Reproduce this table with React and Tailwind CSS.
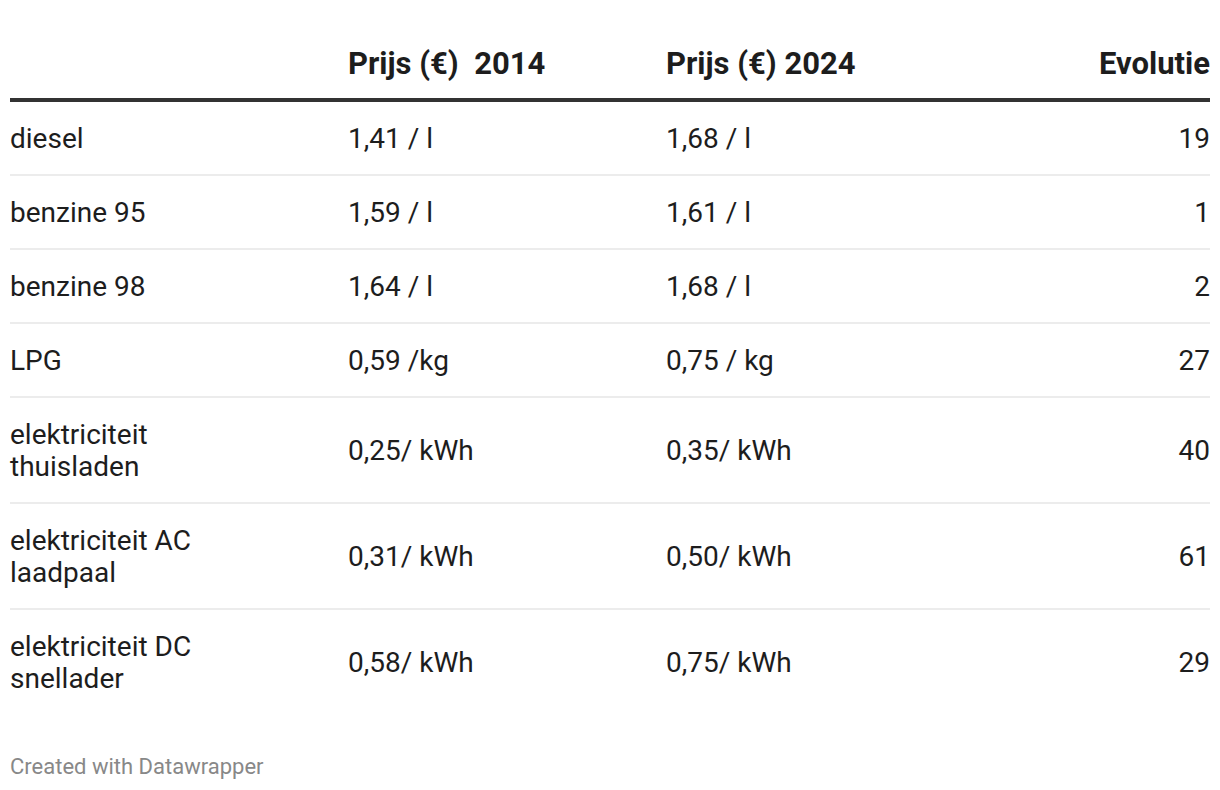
export default function App() {
  const rows = [
    ["diesel", "1,41 / l", "1,68 / l", "19"],
    ["benzine 95", "1,59 / l", "1,61 / l", "1"],
    ["benzine 98", "1,64 / l", "1,68 / l", "2"],
    ["LPG", "0,59 /kg", "0,75 / kg", "27"],
    [["elektriciteit", "thuisladen"], "0,25/ kWh", "0,35/ kWh", "40"],
    [["elektriciteit AC", "laadpaal"], "0,31/ kWh", "0,50/ kWh", "61"],
    [["elektriciteit DC", "snellader"], "0,58/ kWh", "0,75/ kWh", "29"],
  ];
  return (
    <div className="w-[1220px] h-[790px] bg-white text-[#1d1d1d]" style={{ fontFamily: "Roboto, 'Noto Sans', sans-serif" }}>
      <div className="pl-[10px] pr-[10px] pt-[48px]">
        <div className="grid grid-cols-[338px_318px_1fr_200px] items-center pb-[18px] border-b-4 border-[#333] text-[31px] leading-[32px] font-bold">
          <div></div>
          <div className="whitespace-pre">Prijs (€)  2014</div>
          <div>Prijs (€) 2024</div>
          <div className="text-right">Evolutie</div>
        </div>
        {rows.map((r, i) => (
          <div
            key={i}
            className={
              "grid grid-cols-[338px_318px_1fr_200px] items-center pt-[21px] pb-[19px] text-[28px] leading-[32px] " +
              (i < rows.length - 1 ? "border-b-2 border-[#ececec]" : "")
            }
          >
            <div>
              {Array.isArray(r[0]) ? (
                <>
                  <div>{r[0][0]}</div>
                  <div>{r[0][1]}</div>
                </>
              ) : (
                r[0]
              )}
            </div>
            <div>{r[1]}</div>
            <div>{r[2]}</div>
            <div className="text-right">{r[3]}</div>
          </div>
        ))}
        <div className="mt-[39px] text-[22px] leading-[28px] text-[#888888]">Created with Datawrapper</div>
      </div>
    </div>
  );
}
